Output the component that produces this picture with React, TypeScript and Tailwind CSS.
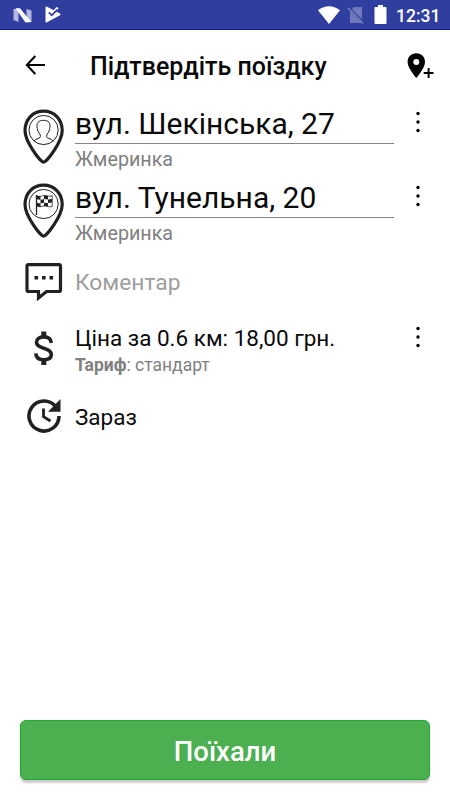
import type { ReactNode } from 'react';

const StatusBar = () => {
    return (
        <div className="flex h-[30px] items-center border-b border-[#1a1a8c] bg-[#303f9f] pl-[13px] pr-[10px] text-white">
            <svg className="mt-[1px]" width="19" height="15" viewBox="0 0 19 15">
                <path d="M0.500 1h5v13L0.500 12zM13.500 1L18.500 2.500V14h-5z" fill="#b3b9de" />
                <path d="M2.500 0.300L7 0.300L18.300 14L12.500 14.500z" fill="#fff" />
            </svg>
            <svg className="ml-[13px]" width="16" height="17" viewBox="0 0 16 17">
                <path d="M0.500 1.500Q0.500 0 2 0.800L15 7.500Q16.200 8.500 15 9.300L2 16.200Q0.500 17 0.500 15.500z" fill="#fff" />
                <path d="M8 4.700L12 0.800L13.500 2.500L10 6z" fill="#fff" />
                <path d="M3.800 6.300L6.800 9.300L12.300 3.700" fill="none" stroke="#303f9f" strokeWidth="1.700" />
            </svg>
            <div className="ml-auto flex items-center">
                <svg width="22" height="18" viewBox="0 0 22 18">
                    <path d="M0 4.300Q11-3.800 22 4.300L11 18z" fill="#fff" />
                </svg>
                <svg className="ml-[8px]" width="16" height="18" viewBox="0 0 16 18">
                    <path d="M6 1H14V17H2V5z" fill="#6f79bc" />
                    <path d="M0 1.500L15.500 17" stroke="#303f9f" strokeWidth="3" />
                    <path d="M0 2L15 17.500" stroke="#8890c8" strokeWidth="1.200" />
                </svg>
                <svg className="ml-[10px]" width="13" height="19" viewBox="0 0 13 19">
                    <path d="M4 0h5v2h2.500q1 0 1 1v15q0 1-1 1H1.500q-1 0-1-1V3q0-1 1-1H4z" fill="#fff" />
                </svg>
                <span className="ml-[9px] mt-[3px] w-[44px] whitespace-nowrap text-[17.500px] leading-5 font-medium">12:31</span>
            </div>
        </div>
    );
};

const Pin = ({ children }: { children: ReactNode }) => {
    return (
        <svg width="42" height="56" viewBox="0 0 42 56" fill="none" stroke="#212121">
            <path d="M21.600 53.200C18.600 53.200 3 33 3 21.500C3 10 11 2.200 21.600 2.200S40.200 10 40.200 21.500C40.200 33 24.600 53.200 21.600 53.200z" strokeWidth="3.200" />
            <circle cx="21.600" cy="21" r="14.600" />
            {children}
        </svg>
    );
};

const PersonPin = () => {
    return (
        <Pin>
            <path d="M12 32.300Q12 30.500 17.700 28.800Q19 27.800 18 25Q16 24 15.300 19.500C14 14 16.500 11.300 21.500 11.300S29 14 27.700 19.500Q27 24 25 25Q24 27.800 25.300 28.800Q31 30.500 31 32.300" />
        </Pin>
    );
};

const FlagPin = () => {
    return (
        <Pin>
            <path d="M14.500 12V32" strokeWidth="1.300" />
            <path d="M14.500 12.700C18.500 15 20.500 11.500 24.500 12.700Q27.500 14 30.200 12.500V23.500C26.500 25 24.500 21.800 21 23.200Q17.500 24.500 14.500 22.800" strokeWidth="0.800" />
            <path d="M14.500 12.500L18.500 13.500V17L14.500 16zM22 12.500L26 13V16.500L22 16zM18.500 17L22 16V19.800L18.500 20.500zM26 16.500L30 16V19.500L26 20zM14.500 19.800L18.500 20.500V24L14.500 23zM22 19.800L26 20V23.500L22 23z" fill="#212121" stroke="none" />
        </Pin>
    );
};

const MoreIcon = () => {
    return (
        <svg width="4" height="22" viewBox="0 0 4 22" fill="#000">
            <circle cx="2" cy="2.500" r="1.700" />
            <circle cx="2" cy="11" r="1.700" />
            <circle cx="2" cy="19.500" r="1.700" />
        </svg>
    );
};

const AddressRow = ({ icon, street, city }: { icon: ReactNode; street: string; city: string }) => {
    return (
        <div className="flex h-[74px]">
            <div className="w-[75px] shrink-0 pl-[22px] pt-[4px]">{icon}</div>
            <div className="w-[319px]">
                <p className="h-[39px] whitespace-nowrap border-b border-[#858585] text-[30px] leading-[38px]">{street}</p>
                <p className="pt-[4px] text-[19.700px] leading-6 text-[#808080]">{city}</p>
            </div>
            <div className="pl-[22px] pt-[6px]"><MoreIcon /></div>
        </div>
    );
};

const App = () => {
    return (
        <div className="flex h-[800px] w-[450px] flex-col overflow-hidden bg-white font-[Roboto,sans-serif] text-[#0a0a0a]">
            <StatusBar />
            <div className="flex h-[75px] items-center pl-[25px] pr-[15px]">
                <svg className="mb-[5px]" width="21" height="20" viewBox="0 0 21 20" fill="none" stroke="#000" strokeWidth="2">
                    <path d="M10.300 1L1.800 10L10.300 19M2 10H20" />
                </svg>
                <h1 className="mb-[2px] ml-[44px] whitespace-nowrap text-[25px] leading-8 font-medium">Підтвердіть поїздку</h1>
                <svg className="mb-[4px] ml-auto" width="28" height="26" viewBox="0 0 28 26">
                    <path d="M9.300 0.300C4 0.300 0.600 4.100 0.600 9C0.600 15.300 9.300 25 9.300 25S18 15.300 18 9C18 4.100 14.600 0.300 9.300 0.300zM9.300 6.100a3 3 0 1 1 0 6a3 3 0 1 1 0-6z" fill="#000" />
                    <path d="M16.700 20H26.500M21.600 15V25" stroke="#000" strokeWidth="1.900" />
                </svg>
            </div>

            <AddressRow icon={<PersonPin />} street="вул. Шекінська, 27" city="Жмеринка" />
            <AddressRow icon={<FlagPin />} street="вул. Тунельна, 20" city="Жмеринка" />

            <div className="flex h-[68px]">
                <div className="w-[75px] pl-[25px] pt-[10px]">
                    <svg width="38" height="38" viewBox="0 0 38 38" fill="none" stroke="#212121" strokeWidth="3.200">
                        <path d="M3.500 1.700H34Q35.500 1.700 35.500 3.200V27Q35.500 28.500 34 28.500H21.500L13.500 35V28.500H3.500Q2 28.500 2 27V3.200Q2 1.700 3.500 1.700z" />
                        <path d="M9.500 14.700h3.600M17 14.700h3.600M24.500 14.700h3.600" strokeWidth="3.600" />
                    </svg>
                </div>
                <p className="pt-[15px] text-[22.800px] leading-[30px] text-[#9e9e9e]">Коментар</p>
            </div>

            <div className="flex h-[70px]">
                <div className="w-[75px] shrink-0 pl-[34px] pt-[10px]">
                    <svg width="20" height="35" viewBox="0 0 20 35" fill="none" stroke="#212121">
                        <path d="M17.300 12C17 8 14 5.900 9.800 5.900C5.200 5.900 2.500 8.100 2.500 11.300C2.500 14.800 5.500 16 9.800 17.200C14.500 18.500 17.300 19.900 17.300 23.500C17.300 26.900 14.200 28.700 9.800 28.700C5.200 28.700 2 26.500 1.800 22.300" strokeWidth="3.600" />
                        <path d="M9.800 0.500V6M9.800 28.500V34" strokeWidth="5" />
                    </svg>
                </div>
                <div className="w-[319px]">
                    <p className="pt-[2px] whitespace-nowrap text-[22.500px] leading-[30px]">Ціна за 0.6 км: 18,00 грн.</p>
                    <p className="pt-[1px] text-[17.500px] leading-[22px] text-[#808080]"><b>Тариф</b>: стандарт</p>
                </div>
                <div className="pl-[22px] pt-[5px]"><MoreIcon /></div>
            </div>

            <div className="flex h-[60px]">
                <div className="w-[75px] pl-[26px] pt-[7px]">
                    <svg width="36" height="36" viewBox="0 0 36 36" fill="none" stroke="#212121">
                        <path d="M30 9A15 15 0 1 0 33 18" strokeWidth="3.600" />
                        <path d="M34.500 1V13.800H22z" fill="#212121" stroke="none" />
                        <path d="M17.500 10.500V18.800L24.500 23" strokeWidth="2.800" />
                    </svg>
                </div>
                <p className="pt-[11px] text-[22.500px] leading-[30px]">Зараз</p>
            </div>

            <button className="mx-5 mb-5 mt-auto h-[60px] rounded-[6px] border border-[#22a930] bg-[#4caf50] pt-[4px] text-[27.500px] font-medium text-white shadow-[0_3px_2px_rgba(0,0,0,0.2)]">
                Поїхали
            </button>
        </div>
    );
};

export default App;
